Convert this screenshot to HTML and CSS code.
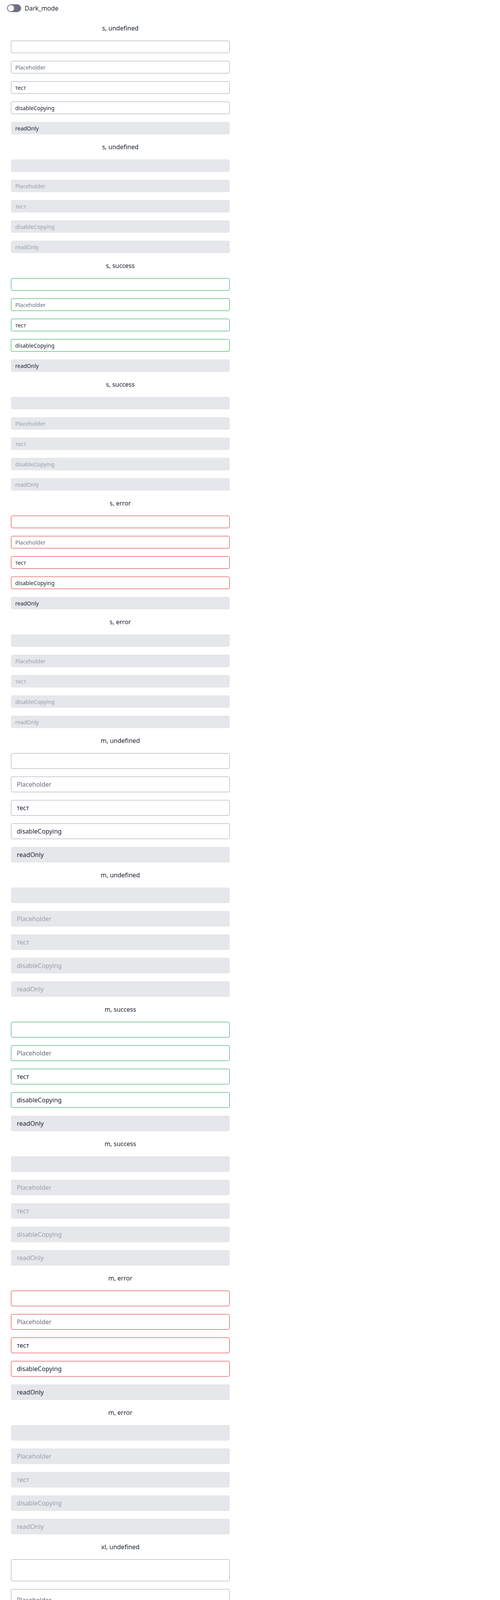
FILE: index.html
```html
<!DOCTYPE html>
<html lang="ru">
<head>
<meta charset="utf-8">
<title>Input</title>
<link rel="stylesheet" href="styles.css">
</head>
<body>
<div class="topbar">
  <label class="toggle"><span class="switch"></span><span class="toggle-label">Dark_mode</span></label>
</div>
<main class="stack">
  <section class="group">
    <h2 class="title">s, undefined</h2>
    <input class="field field--s" type="text">
    <input class="field field--s" type="text" placeholder="Placeholder">
    <input class="field field--s" type="text" value="тест">
    <input class="field field--s" type="text" value="disableCopying">
    <input class="field field--s" type="text" value="readOnly" readonly>
  </section>
  <section class="group">
    <h2 class="title">s, undefined</h2>
    <input class="field field--s" type="text" disabled>
    <input class="field field--s" type="text" placeholder="Placeholder" disabled>
    <input class="field field--s" type="text" value="тест" disabled>
    <input class="field field--s" type="text" value="disableCopying" disabled>
    <input class="field field--s" type="text" value="readOnly" readonly disabled>
  </section>
  <section class="group">
    <h2 class="title">s, success</h2>
    <input class="field field--s field--success" type="text">
    <input class="field field--s field--success" type="text" placeholder="Placeholder">
    <input class="field field--s field--success" type="text" value="тест">
    <input class="field field--s field--success" type="text" value="disableCopying">
    <input class="field field--s field--success" type="text" value="readOnly" readonly>
  </section>
  <section class="group">
    <h2 class="title">s, success</h2>
    <input class="field field--s field--success" type="text" disabled>
    <input class="field field--s field--success" type="text" placeholder="Placeholder" disabled>
    <input class="field field--s field--success" type="text" value="тест" disabled>
    <input class="field field--s field--success" type="text" value="disableCopying" disabled>
    <input class="field field--s field--success" type="text" value="readOnly" readonly disabled>
  </section>
  <section class="group">
    <h2 class="title">s, error</h2>
    <input class="field field--s field--error" type="text">
    <input class="field field--s field--error" type="text" placeholder="Placeholder">
    <input class="field field--s field--error" type="text" value="тест">
    <input class="field field--s field--error" type="text" value="disableCopying">
    <input class="field field--s field--error" type="text" value="readOnly" readonly>
  </section>
  <section class="group">
    <h2 class="title">s, error</h2>
    <input class="field field--s field--error" type="text" disabled>
    <input class="field field--s field--error" type="text" placeholder="Placeholder" disabled>
    <input class="field field--s field--error" type="text" value="тест" disabled>
    <input class="field field--s field--error" type="text" value="disableCopying" disabled>
    <input class="field field--s field--error" type="text" value="readOnly" readonly disabled>
  </section>

  <section class="group">
    <h2 class="title">m, undefined</h2>
    <input class="field field--m" type="text">
    <input class="field field--m" type="text" placeholder="Placeholder">
    <input class="field field--m" type="text" value="тест">
    <input class="field field--m" type="text" value="disableCopying">
    <input class="field field--m" type="text" value="readOnly" readonly>
  </section>
  <section class="group">
    <h2 class="title">m, undefined</h2>
    <input class="field field--m" type="text" disabled>
    <input class="field field--m" type="text" placeholder="Placeholder" disabled>
    <input class="field field--m" type="text" value="тест" disabled>
    <input class="field field--m" type="text" value="disableCopying" disabled>
    <input class="field field--m" type="text" value="readOnly" readonly disabled>
  </section>
  <section class="group">
    <h2 class="title">m, success</h2>
    <input class="field field--m field--success" type="text">
    <input class="field field--m field--success" type="text" placeholder="Placeholder">
    <input class="field field--m field--success" type="text" value="тест">
    <input class="field field--m field--success" type="text" value="disableCopying">
    <input class="field field--m field--success" type="text" value="readOnly" readonly>
  </section>
  <section class="group">
    <h2 class="title">m, success</h2>
    <input class="field field--m field--success" type="text" disabled>
    <input class="field field--m field--success" type="text" placeholder="Placeholder" disabled>
    <input class="field field--m field--success" type="text" value="тест" disabled>
    <input class="field field--m field--success" type="text" value="disableCopying" disabled>
    <input class="field field--m field--success" type="text" value="readOnly" readonly disabled>
  </section>
  <section class="group">
    <h2 class="title">m, error</h2>
    <input class="field field--m field--error" type="text">
    <input class="field field--m field--error" type="text" placeholder="Placeholder">
    <input class="field field--m field--error" type="text" value="тест">
    <input class="field field--m field--error" type="text" value="disableCopying">
    <input class="field field--m field--error" type="text" value="readOnly" readonly>
  </section>
  <section class="group">
    <h2 class="title">m, error</h2>
    <input class="field field--m field--error" type="text" disabled>
    <input class="field field--m field--error" type="text" placeholder="Placeholder" disabled>
    <input class="field field--m field--error" type="text" value="тест" disabled>
    <input class="field field--m field--error" type="text" value="disableCopying" disabled>
    <input class="field field--m field--error" type="text" value="readOnly" readonly disabled>
  </section>

  <section class="group">
    <h2 class="title">xl, undefined</h2>
    <input class="field field--xl" type="text">
    <input class="field field--xl" type="text" placeholder="Placeholder">
    <input class="field field--xl" type="text" value="тест">
    <input class="field field--xl" type="text" value="disableCopying">
    <input class="field field--xl" type="text" value="readOnly" readonly>
  </section>
  <section class="group">
    <h2 class="title">xl, undefined</h2>
    <input class="field field--xl" type="text" disabled>
    <input class="field field--xl" type="text" placeholder="Placeholder" disabled>
    <input class="field field--xl" type="text" value="тест" disabled>
    <input class="field field--xl" type="text" value="disableCopying" disabled>
    <input class="field field--xl" type="text" value="readOnly" readonly disabled>
  </section>
  <section class="group">
    <h2 class="title">xl, success</h2>
    <input class="field field--xl field--success" type="text">
    <input class="field field--xl field--success" type="text" placeholder="Placeholder">
    <input class="field field--xl field--success" type="text" value="тест">
    <input class="field field--xl field--success" type="text" value="disableCopying">
    <input class="field field--xl field--success" type="text" value="readOnly" readonly>
  </section>
  <section class="group">
    <h2 class="title">xl, success</h2>
    <input class="field field--xl field--success" type="text" disabled>
    <input class="field field--xl field--success" type="text" placeholder="Placeholder" disabled>
    <input class="field field--xl field--success" type="text" value="тест" disabled>
    <input class="field field--xl field--success" type="text" value="disableCopying" disabled>
    <input class="field field--xl field--success" type="text" value="readOnly" readonly disabled>
  </section>
  <section class="group">
    <h2 class="title">xl, error</h2>
    <input class="field field--xl field--error" type="text">
    <input class="field field--xl field--error" type="text" placeholder="Placeholder">
    <input class="field field--xl field--error" type="text" value="тест">
    <input class="field field--xl field--error" type="text" value="disableCopying">
    <input class="field field--xl field--error" type="text" value="readOnly" readonly>
  </section>
  <section class="group">
    <h2 class="title">xl, error</h2>
    <input class="field field--xl field--error" type="text" disabled>
    <input class="field field--xl field--error" type="text" placeholder="Placeholder" disabled>
    <input class="field field--xl field--error" type="text" value="тест" disabled>
    <input class="field field--xl field--error" type="text" value="disableCopying" disabled>
    <input class="field field--xl field--error" type="text" value="readOnly" readonly disabled>
  </section>
</main>
</body>
</html>
```
FILE: styles.css
```css
* {
  box-sizing: border-box;
}

body {
  margin: 0;
  background: #ffffff;
  color: #1f2937;
  font-family: "Noto Sans", "Open Sans", sans-serif;
}

.topbar {
  display: flex;
  align-items: center;
  height: 31px;
  padding: 11px 18px 0;
}

.toggle {
  display: flex;
  align-items: center;
  gap: 9px;
  font-size: 16px;
  line-height: 20px;
  color: #1f2937;
  cursor: pointer;
}

.switch {
  position: relative;
  display: block;
  width: 36px;
  height: 20px;
  border-radius: 10px;
  background: #6b7280;
}

.switch::after {
  content: "";
  position: absolute;
  top: 2px;
  left: 2px;
  width: 16px;
  height: 16px;
  border-radius: 50%;
  background: #ffffff;
}

.stack {
  display: flex;
  flex-direction: column;
  gap: 20px;
  width: 616px;
  padding: 29px 28px 20px;
}

.group {
  display: flex;
  flex-direction: column;
  gap: 20px;
}

.title {
  margin: 0;
  font-size: 16px;
  line-height: 24px;
  font-weight: 400;
  text-align: center;
  color: #1f2937;
}

.field {
  display: block;
  width: 100%;
  margin: 0;
  border: 1px solid #9ca3af;
  border-radius: 4px;
  background: #ffffff;
  color: #1f2937;
  font-family: inherit;
  outline: none;
}

.field::placeholder {
  color: #6b7280;
  opacity: 1;
}

.field--s {
  height: 32px;
  padding: 0 10px;
  font-size: 14px;
}

.field--m {
  height: 40px;
  padding: 0 14px;
  font-size: 16px;
}

.field--xl {
  height: 56px;
  padding: 0 14px;
  font-size: 16px;
}

.field--success {
  border-color: #16a34a;
}

.field--error {
  border-color: #dc2626;
}

.field[readonly] {
  background: #e5e7eb;
  border-color: #e5e7eb;
}

.field:disabled {
  background: #e5e7eb;
  border-color: #e5e7eb;
  color: #9ca3af;
  -webkit-text-fill-color: #9ca3af;
}

.field:disabled::placeholder {
  color: #9ca3af;
  -webkit-text-fill-color: #9ca3af;
}
```
